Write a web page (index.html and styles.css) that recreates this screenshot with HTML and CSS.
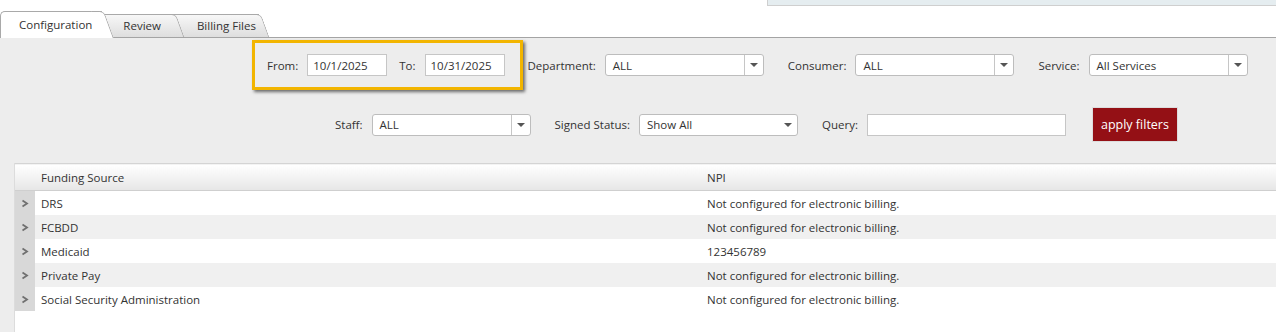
FILE: index.html
```html
<!DOCTYPE html>
<html lang="en">
<head>
  <meta charset="UTF-8" />
  <title>Billing</title>
  <link rel="stylesheet" href="styles.css">
</head>
<body>

  <div class="header">
    <div class="tabs">
      <div class="tab active">Configuration</div>
      <div class="tab t2">Review</div>
      <div class="tab t3">Billing Files</div>
    </div>
    <div class="notice"></div>
  </div>

  <div class="panel">
    <div class="filter-row row-one">
      <div class="highlight">
        <label>From:</label>
        <input class="date" type="text" value="10/1/2025">
        <label class="to">To:</label>
        <input class="date" type="text" value="10/31/2025">
      </div>

      <label class="first">Department:</label>
      <div class="select"><span>ALL</span><span class="arrow-btn"></span></div>

      <label>Consumer:</label>
      <div class="select"><span>ALL</span><span class="arrow-btn"></span></div>

      <label>Service:</label>
      <div class="select"><span>All Services</span><span class="arrow-btn"></span></div>
    </div>

    <div class="filter-row row-two">
      <label>Staff:</label>
      <div class="select"><span>ALL</span><span class="arrow-btn"></span></div>

      <label>Signed Status:</label>
      <div class="select plain"><span>Show All</span><span class="arrow-btn"></span></div>

      <label>Query:</label>
      <input class="query" type="text">

      <button class="apply">apply filters</button>
    </div>

    <div class="grid">
      <table>
        <thead>
          <tr>
            <th class="expand"></th>
            <th class="col-source">Funding Source</th>
            <th>NPI</th>
          </tr>
        </thead>
        <tbody>
          <tr><td class="expand"><svg width="8" height="9" viewBox="0 0 8 9"><polyline points="1.5,1.5 6,4.5 1.5,7.5" /></svg></td><td>DRS</td><td>Not configured for electronic billing.</td></tr>
          <tr><td class="expand"><svg width="8" height="9" viewBox="0 0 8 9"><polyline points="1.5,1.5 6,4.5 1.5,7.5" /></svg></td><td>FCBDD</td><td>Not configured for electronic billing.</td></tr>
          <tr><td class="expand"><svg width="8" height="9" viewBox="0 0 8 9"><polyline points="1.5,1.5 6,4.5 1.5,7.5" /></svg></td><td>Medicaid</td><td>123456789</td></tr>
          <tr><td class="expand"><svg width="8" height="9" viewBox="0 0 8 9"><polyline points="1.5,1.5 6,4.5 1.5,7.5" /></svg></td><td>Private Pay</td><td>Not configured for electronic billing.</td></tr>
          <tr><td class="expand"><svg width="8" height="9" viewBox="0 0 8 9"><polyline points="1.5,1.5 6,4.5 1.5,7.5" /></svg></td><td>Social Security Administration</td><td>Not configured for electronic billing.</td></tr>
        </tbody>
      </table>
    </div>
  </div>

</body>
</html>
```

FILE: styles.css
```css
body {
  margin: 0;
  font-family: "Open Sans", Arial, sans-serif;
  font-size: 11.5px;
  color: #333;
  background: #fff;
}

.header {
  display: flex;
  height: 37px;
}

.tabs {
  display: flex;
  align-items: flex-end;
}

.tab {
  position: relative;
  height: 22px;
  line-height: 22px;
  padding: 0 13px 0 28px;
  margin-left: -8px;
  border: 1px solid #a9a9a9;
  border-right: none;
  border-bottom: none;
  border-radius: 5px 0 0 0;
  background: linear-gradient(#f7f7f7, #dedede);
  color: #333;
  z-index: 2;
}

.tab::after {
  content: "";
  position: absolute;
  top: -1px;
  right: -2px;
  width: 12px;
  height: 100%;
  border-top: 1px solid #a9a9a9;
  border-right: 1px solid #a9a9a9;
  border-radius: 0 5px 0 0;
  background: linear-gradient(#f7f7f7, #dedede);
  transform: skewX(20deg);
  transform-origin: top;
  z-index: -1;
}

.tab.active {
  margin-left: 0;
  margin-bottom: -1px;
  height: 26px;
  line-height: 25px;
  padding: 0 10px 0 18px;
  background: #fff;
  z-index: 3;
}

.tab.active::after {
  background: #fff;
}

.tab.t3 {
  z-index: 1;
  padding-left: 30px;
  padding-right: 3px;
}

.notice {
  margin-left: auto;
  width: 508px;
  height: 5px;
  background: #e5edf0;
  border-left: 1px solid #cfcfcf;
  border-bottom: 1px solid #cfcfcf;
}

.panel {
  display: flex;
  flex-direction: column;
  height: 294px;
  background: #ededed;
  border-top: 1px solid #a4a4a4;
}

.filter-row {
  display: flex;
  align-items: center;
}

.filter-row label {
  margin-right: 9px;
  margin-left: 24px;
}

.row-one {
  margin-top: 2px;
  padding-left: 252px;
}

.row-one label.first {
  margin-left: 5px;
}

.highlight {
  display: flex;
  align-items: center;
  height: 44px;
  padding: 0 15px 0 12px;
  border: 3px solid #f2b500;
  box-shadow: 2px 2px 3px rgba(0, 0, 0, 0.55);
}

.highlight label {
  margin-left: 0;
}

.highlight label.to {
  margin-left: 12px;
}

input {
  font-family: inherit;
  font-size: 11.5px;
  color: #333;
  border: 1px solid #c6c6c6;
  background: #fff;
  box-sizing: border-box;
  height: 22px;
  padding: 0 5px;
  outline: none;
}

input.date {
  width: 80px;
}

input.query {
  width: 199px;
  margin-right: 26px;
}

.select {
  display: flex;
  align-items: center;
  width: 159px;
  height: 22px;
  box-sizing: border-box;
  border: 1px solid #bdbdbd;
  border-radius: 3px;
  background: #fff;
}

.select span:first-child {
  flex: 1;
  padding-left: 7px;
}

.arrow-btn {
  position: relative;
  width: 18px;
  height: 20px;
  border-left: 1px solid #c6c6c6;
}

.arrow-btn::after {
  content: "";
  position: absolute;
  left: 5px;
  top: 8px;
  border-left: 4px solid transparent;
  border-right: 4px solid transparent;
  border-top: 4px solid #555;
}

.select.plain .arrow-btn {
  border-left: none;
}

.row-two {
  margin-top: 17px;
  padding-left: 335px;
}

.row-two label:first-child {
  margin-left: 0;
}

button.apply {
  width: 86px;
  height: 35px;
  border: 1px solid #ddd;
  background: #941015;
  color: #fff;
  font-family: inherit;
  font-size: 12.5px;
  padding: 0;
}

.grid {
  flex: 1;
  margin: 21px 0 0 14px;
  background: #fff;
  border-left: 1px solid #dcdcdc;
}

table {
  width: 100%;
  border-collapse: collapse;
}

th {
  height: 26px;
  padding: 0 6px;
  text-align: left;
  font-weight: normal;
  background: linear-gradient(#ffffff, #e6e6e6);
  border-top: 1px solid #d4d4d4;
  border-bottom: 1px solid #cfcfcf;
}

th.col-source {
  width: 654px;
}

td {
  height: 24px;
  padding: 0 6px;
}

tbody tr:nth-child(even) td {
  background: #f0f0f0;
}

th.expand,
td.expand {
  width: 8px;
  padding: 0 6px;
}

tbody td.expand,
tbody tr:nth-child(even) td.expand {
  background: #d8d8d8;
}

td.expand svg {
  display: block;
  fill: none;
  stroke: #707070;
  stroke-width: 1.8;
}
```
